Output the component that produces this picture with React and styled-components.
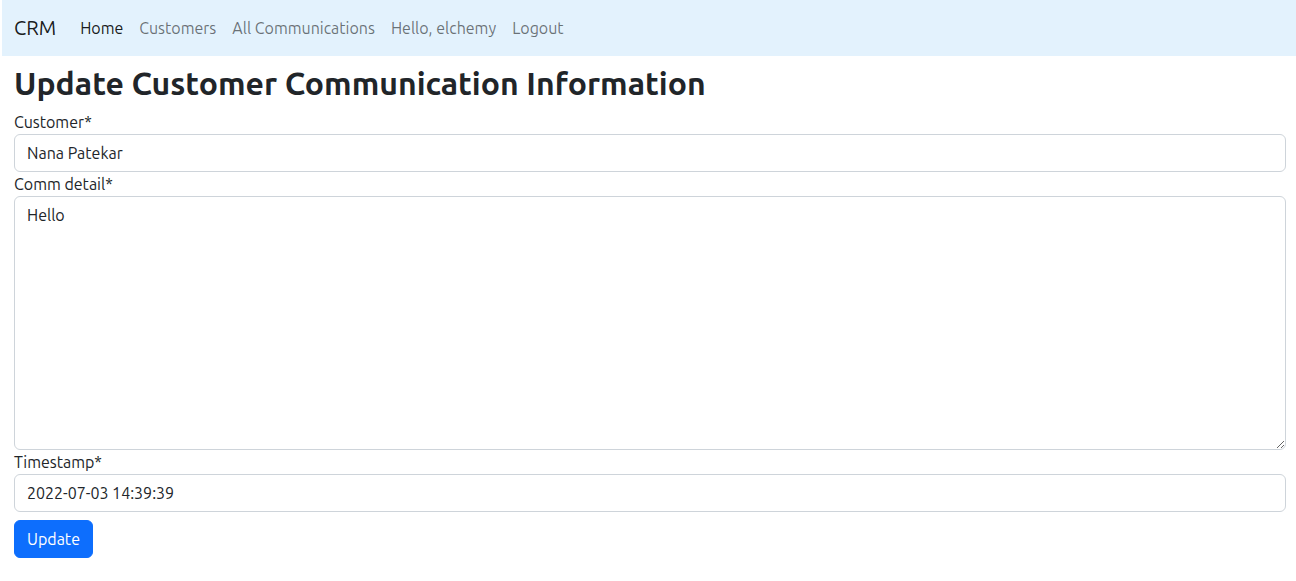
import React from "react";
import styled, { createGlobalStyle, css } from "styled-components";

const GlobalStyle = createGlobalStyle`
  *, *::before, *::after { box-sizing: border-box; }
  body {
    margin: 0;
    padding-left: 2px;
    background: #fff;
    color: #212529;
    font-family: Ubuntu, "Noto Sans", "Liberation Sans", sans-serif;
    font-size: 16px;
    line-height: 24px;
  }
`;

const Navbar = styled.nav`
  display: flex;
  align-items: center;
  padding: 8px 12px;
  background: #e3f2fd;
`;

const Brand = styled.a`
  margin-right: 16px;
  padding: 5px 0;
  color: rgba(0, 0, 0, 0.9);
  font-size: 20px;
  line-height: 30px;
  text-decoration: none;
  white-space: nowrap;
`;

const NavList = styled.ul`
  display: flex;
  margin: 0;
  padding: 0;
  list-style: none;
`;

const NavLink = styled.a`
  display: block;
  padding: 8px;
  color: ${(p) => (p.$active ? "rgba(0, 0, 0, 0.9)" : "rgba(0, 0, 0, 0.55)")};
  text-decoration: none;
  white-space: nowrap;
`;

const Main = styled.main`
  padding: 8px 10px 8px 12px;
`;

const Title = styled.h1`
  margin: 0 0 8px;
  font-size: 32px;
  font-weight: 600;
  line-height: 38px;
`;

const Form = styled.form`
  display: flex;
  flex-direction: column;
  align-items: flex-start;
`;

const Field = styled.div`
  width: 100%;
`;

const Label = styled.label`
  display: block;
  width: fit-content;
`;

const control = css`
  display: block;
  width: 100%;
  margin: 0;
  padding: 6px 12px;
  border: 1px solid #ced4da;
  border-radius: 6px;
  background: #fff;
  color: #212529;
  font: inherit;
  appearance: none;
`;

const Select = styled.select`
  ${control}
`;

const Input = styled.input`
  ${control}
`;

const TextArea = styled.textarea`
  ${control}
  resize: vertical;
`;

const SubmitButton = styled.button`
  margin-top: 8px;
  padding: 6px 12px;
  border: 1px solid #0d6efd;
  border-radius: 6px;
  background: #0d6efd;
  color: #fff;
  font: inherit;
  cursor: pointer;
`;

const links = ["Home", "Customers", "All Communications", "Hello, elchemy", "Logout"];

export default function App() {
  return (
    <>
      <GlobalStyle />
      <Navbar>
        <Brand href="#">CRM</Brand>
        <NavList>
          {links.map((text, i) => (
            <li key={text}>
              <NavLink href="#" $active={i === 0} aria-current={i === 0 ? "page" : undefined}>
                {text}
              </NavLink>
            </li>
          ))}
        </NavList>
      </Navbar>
      <Main>
        <Title>Update Customer Communication Information</Title>
        <Form onSubmit={(e) => e.preventDefault()}>
          <Field>
            <Label htmlFor="customer">Customer*</Label>
            <Select id="customer" name="customer" required defaultValue="1">
              <option value="1">Nana Patekar</option>
            </Select>
          </Field>
          <Field>
            <Label htmlFor="comm_detail">Comm detail*</Label>
            <TextArea id="comm_detail" name="comm_detail" rows={10} required defaultValue="Hello" />
          </Field>
          <Field>
            <Label htmlFor="timestamp">Timestamp*</Label>
            <Input id="timestamp" name="timestamp" type="text" required defaultValue="2022-07-03 14:39:39" />
          </Field>
          <SubmitButton type="submit">Update</SubmitButton>
        </Form>
      </Main>
    </>
  );
}
